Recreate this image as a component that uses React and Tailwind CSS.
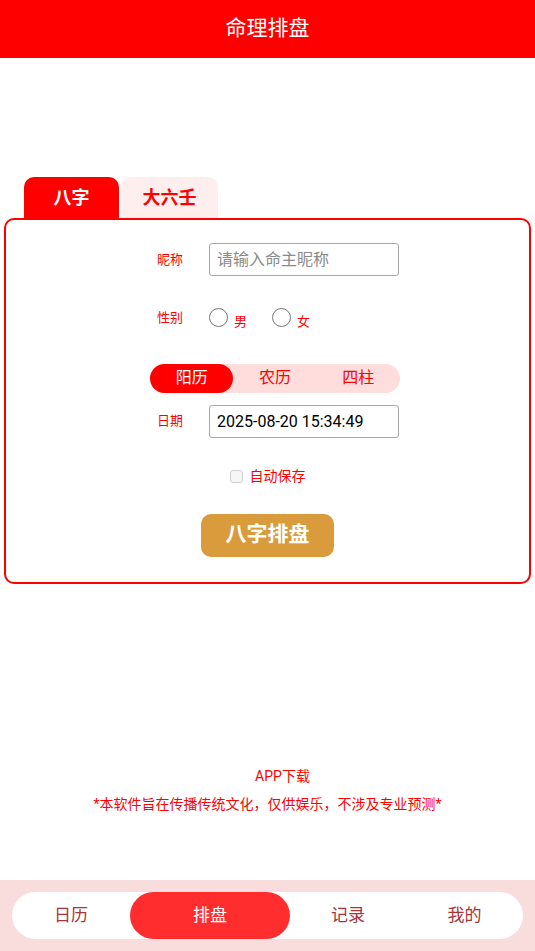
import React, { useState } from 'react';

const font = { fontFamily: 'Roboto, "Noto Sans CJK SC", sans-serif' };

const App = () => {
  const [tab, setTab] = useState('bazi');
  const [calendar, setCalendar] = useState('solar');
  const [gender, setGender] = useState('');
  const [nav, setNav] = useState('paipan');

  const calendars = [
    { key: 'solar', label: '阳历' },
    { key: 'lunar', label: '农历' },
    { key: 'pillar', label: '四柱' },
  ];

  const navItems = [
    { key: 'calendar', label: '日历', w: 'w-[118px]' },
    { key: 'paipan', label: '排盘', w: 'w-[160px]' },
    { key: 'record', label: '记录', w: 'w-[116px]' },
    { key: 'mine', label: '我的', w: 'w-[117px]' },
  ];

  return (
    <div className="min-h-screen flex flex-col bg-white" style={font}>
      {/* Header */}
      <div className="h-[58px] bg-[#ff0000] flex items-center justify-center">
        <h1 className="text-white text-[21px] font-normal">命理排盘</h1>
      </div>

      {/* Tabs */}
      <div className="mt-[119px] flex px-[24px] gap-[2px]">
        <button
          onClick={() => setTab('bazi')}
          className={`w-[95px] h-[41px] rounded-t-[10px] text-[18px] font-bold ${
            tab === 'bazi' ? 'bg-[#ff0000] text-white' : 'bg-[#ffeeee] text-[#ff0000]'
          }`}
        >
          八字
        </button>
        <button
          onClick={() => setTab('liuren')}
          className={`w-[97px] h-[41px] rounded-t-[10px] text-[18px] font-bold ${
            tab === 'liuren' ? 'bg-[#ff0000] text-white' : 'bg-[#ffeeee] text-[#ff0000]'
          }`}
        >
          大六壬
        </button>
      </div>

      {/* Form card */}
      <div className="mx-[4px] border-2 border-[#ff0000] rounded-[10px] pt-[23px] pb-[25px]">
        <div className="flex items-center ml-[151px]">
          <span className="w-[52px] text-[13px] text-[#ff0000]">昵称</span>
          <input
            type="text"
            placeholder="请输入命主昵称"
            className="w-[190px] h-[33px] border border-[#a9a9a9] rounded-[3px] px-[7px] text-[16px] text-black placeholder:text-[#8a8a8a] outline-none"
          />
        </div>

        <div className="flex items-center ml-[151px] mt-[28px]">
          <span className="w-[52px] text-[13px] text-[#ff0000]">性别</span>
          <label className="flex items-center mr-[25px] cursor-pointer" onClick={() => setGender('m')}>
            <span className="w-[19px] h-[19px] rounded-full border border-[#767676] flex items-center justify-center">
              {gender === 'm' && <span className="w-[11px] h-[11px] rounded-full bg-[#ff0000]" />}
            </span>
            <span className="ml-[6px] mt-[8px] text-[13px] text-[#ff0000]">男</span>
          </label>
          <label className="flex items-center cursor-pointer" onClick={() => setGender('f')}>
            <span className="w-[19px] h-[19px] rounded-full border border-[#767676] flex items-center justify-center">
              {gender === 'f' && <span className="w-[11px] h-[11px] rounded-full bg-[#ff0000]" />}
            </span>
            <span className="ml-[6px] mt-[8px] text-[13px] text-[#ff0000]">女</span>
          </label>
        </div>

        <div className="ml-[144px] mt-[32px] w-[250px] h-[29px] rounded-full bg-[#ffdddd] flex">
          {calendars.map((c) => (
            <button
              key={c.key}
              onClick={() => setCalendar(c.key)}
              className={`flex-1 rounded-full text-[16px] ${
                calendar === c.key ? 'bg-[#ff0000] text-white' : 'text-[#ff0000]'
              }`}
            >
              {c.label}
            </button>
          ))}
        </div>

        <div className="flex items-center ml-[151px] mt-[12px]">
          <span className="w-[52px] text-[13px] text-[#ff0000]">日期</span>
          <input
            type="text"
            defaultValue="2025-08-20 15:34:49"
            className="w-[190px] h-[33px] border border-[#a9a9a9] rounded-[3px] px-[7px] text-[16px] text-black outline-none"
          />
        </div>

        <div className="flex items-center justify-center mt-[28px]">
          <span className="w-[13px] h-[13px] rounded-[3px] border border-[#cfcfcf] bg-[#f6f6f6]" />
          <span className="ml-[7px] text-[14px] text-[#ff0000]">自动保存</span>
        </div>

        <div className="flex justify-center mt-[27px]">
          <button className="w-[133px] h-[43px] rounded-[10px] bg-[#d99b3c] text-white text-[21px] font-bold">
            八字排盘
          </button>
        </div>
      </div>

      {/* Footer notes */}
      <div className="mt-[182px] flex flex-col items-center text-[14px] text-[#ff0000]">
        <span className="ml-[30px]">APP下载</span>
        <span className="mt-[7px]">*本软件旨在传播传统文化，仅供娱乐，不涉及专业预测*</span>
      </div>

      {/* Bottom nav */}
      <div className="mt-auto h-[71px] bg-[#f9dcdc] px-[12px] pt-[12px]">
        <div className="h-[47px] bg-white rounded-full flex">
          {navItems.map((n) => (
            <button
              key={n.key}
              onClick={() => setNav(n.key)}
              className={`${n.w} h-full rounded-full text-[17px] ${
                nav === n.key ? 'bg-[#ff2d2d] text-white' : 'text-[#a8343a]'
              }`}
            >
              {n.label}
            </button>
          ))}
        </div>
      </div>
    </div>
  );
};

export default App;
